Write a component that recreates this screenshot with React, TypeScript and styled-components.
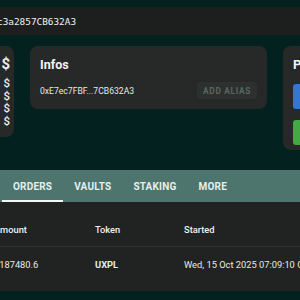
import React from "react";
import styled, { createGlobalStyle } from "styled-components";

const Global = createGlobalStyle`
  html, body { margin: 0; padding: 0; background: #03211e; overflow: hidden; }
  body { font-family: Roboto, "Noto Sans", sans-serif; color: #e8eeec; }
`;

const Page = styled.div`
  width: 600px;
  margin-left: -180px;
  padding-top: 7px;
  display: flex;
  flex-direction: column;
`;

const TopBar = styled.div`
  height: 28px;
  background: #1d1f1e;
  display: flex;
  align-items: center;
  padding-left: 19px;
`;

const Mono = styled.span`
  font-family: "DejaVu Sans Mono", monospace;
  font-size: 9.4px;
  color: #eef2f1;
  white-space: nowrap;
`;

const CardRow = styled.div`
  display: flex;
  align-items: flex-start;
  gap: 16px;
  margin-top: 11px;
`;

const Card = styled.div<{ $w: number; $h: number }>`
  width: ${(p) => p.$w}px;
  height: ${(p) => p.$h}px;
  box-sizing: border-box;
  background: #262928;
  border-radius: 8px;
  padding: 10px;
  flex-shrink: 0;
`;

const BalanceCard = styled(Card)`
  padding: 9px 4px 0 0;
  display: flex;
  flex-direction: column;
  align-items: flex-end;
`;

const BigDollar = styled.div`
  font-size: 15px;
  font-weight: 700;
  line-height: 18px;
  margin-bottom: 4px;
`;

const SmallDollar = styled.div`
  font-size: 11.5px;
  line-height: 12.7px;
  font-weight: 500;
`;

const CardTitle = styled.div`
  font-size: 12.5px;
  font-weight: 700;
  line-height: 18px;
  color: #f2f5f4;
`;

const InfoLine = styled.div`
  display: flex;
  align-items: center;
  justify-content: space-between;
  margin-top: 8px;
`;

const Address = styled.span`
  font-size: 8.6px;
  color: #e3e9e7;
`;

const AliasButton = styled.button`
  width: 60px;
  height: 17px;
  border: none;
  border-radius: 3px;
  background: #2c302f;
  color: #5b6763;
  font-family: Roboto, sans-serif;
  font-size: 8.3px;
  font-weight: 700;
  letter-spacing: 0.7px;
  padding: 0;
`;

const ActionBlock = styled.div<{ $c: string }>`
  width: 60px;
  height: 25px;
  background: ${(p) => p.$c};
  border-radius: 3px;
  margin-top: 11px;
`;

const ActionsTitle = styled(CardTitle)`
  font-size: 13px;
  margin-bottom: -1px;
`;

const Tabs = styled.div`
  margin-top: 20px;
  height: 32px;
  background: #4d756d;
  display: flex;
  padding-left: 182px;
`;

const Tab = styled.div<{ $active?: boolean; $pad: number }>`
  padding: 0 ${(p) => p.$pad}px;
  display: flex;
  align-items: center;
  font-size: 10px;
  font-weight: 700;
  letter-spacing: 0.2px;
  color: #e6efec;
  box-shadow: ${(p) => (p.$active ? "inset 0 -2px 0 #f4f7f6" : "none")};
`;

const Table = styled.div`
  background: #212322;
  padding-left: 174px;
  padding-bottom: 10px;
`;

const Row = styled.div<{ $h: number; $top?: number; $line?: boolean }>`
  display: grid;
  grid-template-columns: 101px 89px 1fr;
  align-items: center;
  box-sizing: border-box;
  height: ${(p) => p.$h}px;
  padding-top: ${(p) => p.$top ?? 0}px;
  border-bottom: ${(p) => (p.$line ? "1px solid #2f3231" : "none")};
  font-size: 9.3px;
  white-space: nowrap;
`;

const HeadCell = styled.span`
  font-weight: 500;
  color: #eef2f1;
`;

const Cell = styled.span<{ $bold?: boolean }>`
  font-weight: ${(p) => (p.$bold ? 700 : 400)};
  color: #e6ebe9;
`;

export default function App() {
  return (
    <>
      <Global />
      <Page>
        <TopBar>
          <Mono>0xE7ec7FBF4d21Ab09e5F3b7d6a1c3a2857CB632A3</Mono>
        </TopBar>
        <CardRow>
          <BalanceCard $w={194} $h={91}>
            <BigDollar>$</BigDollar>
            <SmallDollar>$</SmallDollar>
            <SmallDollar>$</SmallDollar>
            <SmallDollar>$</SmallDollar>
            <SmallDollar>$</SmallDollar>
          </BalanceCard>
          <Card $w={237} $h={63}>
            <CardTitle>Infos</CardTitle>
            <InfoLine>
              <Address>0xE7ec7FBF...7CB632A3</Address>
              <AliasButton disabled>ADD ALIAS</AliasButton>
            </InfoLine>
          </Card>
          <Card $w={120} $h={104}>
            <ActionsTitle>Pay</ActionsTitle>
            <ActionBlock $c="#3575d4" />
            <ActionBlock $c="#43a945" />
          </Card>
        </CardRow>
        <Tabs>
          <Tab $active $pad={11}>ORDERS</Tab>
          <Tab $pad={11}>VAULTS</Tab>
          <Tab $pad={11}>STAKING</Tab>
          <Tab $pad={11}>MORE</Tab>
        </Tabs>
        <Table>
          <Row $h={45} $top={10} $line>
            <HeadCell>Amount</HeadCell>
            <HeadCell>Token</HeadCell>
            <HeadCell>Started</HeadCell>
          </Row>
          <Row $h={34}>
            <Cell>1187480.6</Cell>
            <Cell $bold>UXPL</Cell>
            <Cell>Wed, 15 Oct 2025 07:09:10 GMT</Cell>
          </Row>
        </Table>
      </Page>
    </>
  );
}
